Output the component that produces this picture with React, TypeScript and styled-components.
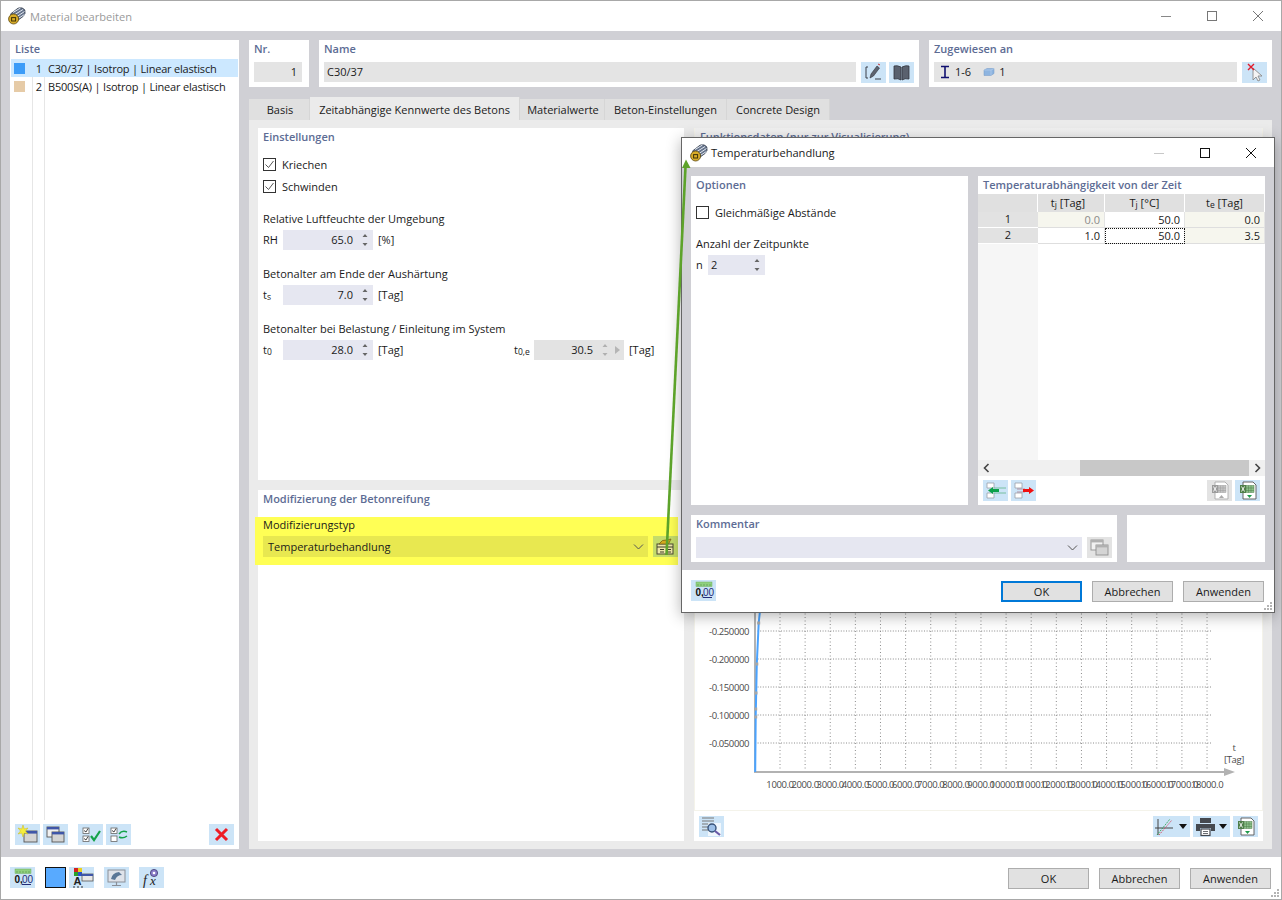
import React from "react";
import styled, { createGlobalStyle } from "styled-components";

const GlobalStyle = createGlobalStyle`
  html, body {
    margin: 0;
    padding: 0;
    background: #fff;
  }
  body {
    font-family: "Open Sans", "Noto Sans", sans-serif;
    font-size: 11px;
    color: #1a1a1a;
  }
  * {
    box-sizing: border-box;
  }
`;

const BLUE = "#cce4f7";

/* ---------- icons ---------- */

const Svg = styled.svg`
  display: block;
  flex-shrink: 0;
`;

function AppLogo() {
  return (
    <Svg width="18" height="18" viewBox="0 0 18 18">
      <path d="M2.5 7 L10 1.2 Q14.5 -0.2 16.8 3 Q18 7 15 9.5 L7.5 15 Z" fill="#66748c" stroke="#333d4d" strokeWidth="0.8" />
      <path d="M5 5.5 L12.5 1 M7 7.5 L15 2.5 M9 9.5 L16.5 4.5 M11 11 L16.5 7.5" stroke="#e3e8f0" strokeWidth="1" />
      <circle cx="5.6" cy="12" r="5" fill="#d8ac28" stroke="#5c4810" strokeWidth="0.8" />
      <rect x="3.6" y="10.6" width="4" height="3.4" fill="none" stroke="#3f3206" strokeWidth="1" />
    </Svg>
  );
}

function EditIcon() {
  return (
    <Svg width="25" height="21" viewBox="0 0 25 21">
      <path d="M7 5 H5 V16 H7 M14 17 H20" fill="none" stroke="#3a3f49" strokeWidth="1" />
      <path d="M9 16 L10 12 L16 4 L18.5 6 L12.5 14 Z" fill="#5d6370" stroke="#2f333b" strokeWidth="0.6" />
      <path d="M17 2 L19 3" stroke="#c33" strokeWidth="1" />
    </Svg>
  );
}

function BookIcon() {
  return (
    <Svg width="25" height="21" viewBox="0 0 25 21">
      <path d="M12 5 Q8 3 5 4 V17 Q9 16 12 18 Z" fill="#5a616e" stroke="#30343c" strokeWidth="0.8" />
      <path d="M13 5 Q17 3 20 4 V17 Q16 16 13 18 Z" fill="#5a616e" stroke="#30343c" strokeWidth="0.8" />
    </Svg>
  );
}

function CursorXIcon() {
  return (
    <Svg width="25" height="21" viewBox="0 0 25 21">
      <path d="M11 6 L11 18 L14 15 L16 19 L18 18 L16 14 L20 14 Z" fill="#f4f4f4" stroke="#8a8a8a" strokeWidth="0.9" />
      <path d="M6 2 L12 8 M12 2 L6 8" stroke="#e11a2b" strokeWidth="1.4" />
    </Svg>
  );
}

function MemberIcon() {
  return (
    <Svg width="12" height="14" viewBox="0 0 12 14">
      <path d="M2 1.5 H10 M6 1.5 V12.5 M2 12.5 H10" stroke="#101070" strokeWidth="1.6" fill="none" />
    </Svg>
  );
}

function SolidIcon() {
  return (
    <Svg width="12" height="10" viewBox="0 0 12 10">
      <path d="M1 3 L4 1.5 H11 V6.5 L8 8.5 H1 Z" fill="#8db4e0" stroke="#7399c7" strokeWidth="0.5" />
      <path d="M1 3 H8 V8.5 M8 3 L11 1.5" stroke="#bcd4ef" strokeWidth="0.6" fill="none" />
    </Svg>
  );
}

function ClapIcon() {
  return (
    <Svg width="25" height="21" viewBox="0 0 25 21">
      <rect x="4" y="8" width="16" height="10" fill="#eee6a8" stroke="#4a4a33" strokeWidth="1" />
      <path d="M4 11 H20 M7 13.5 H11 M14 13.5 H18 M7 16 H11 M14 16 H18" stroke="#3f3f2a" strokeWidth="1" />
      <path d="M6 8 Q9 3 14 4 L18 3 L16 7 L15 8 Z" fill="#d3a91e" stroke="#6e5a14" strokeWidth="0.7" />
    </Svg>
  );
}

function RowInIcon() {
  return (
    <Svg width="25" height="21" viewBox="0 0 25 21">
      <path d="M4 3 H11 V8 H4 Z M4 13 H11 V18 H4 Z" fill="#fff" stroke="#9aa0a8" strokeWidth="0.8" />
      <path d="M11 8 H23 M11 13 H23" stroke="#62b58a" strokeWidth="0.8" />
      <path d="M5 10.5 L10 7 V9 H16 V12 H10 V14 Z" fill="#0ba14a" />
    </Svg>
  );
}

function RowOutIcon() {
  return (
    <Svg width="25" height="21" viewBox="0 0 25 21">
      <path d="M4 3 H11 V8 H4 Z M4 13 H11 V18 H4 Z" fill="#fff" stroke="#9aa0a8" strokeWidth="0.8" />
      <path d="M6 9 H14 M6 12 H14" stroke="#b08a9a" strokeWidth="0.9" />
      <path d="M23 10.5 L18 7 V9 H12 V12 H18 V14 Z" fill="#f01010" />
    </Svg>
  );
}

function SheetIcon({ $active, $import }: { $active?: boolean; $import?: boolean }) {
  const main = $active ? "#4f7f4a" : "#9c9c9c";
  const fill = $active ? "#8cc08a" : "#c4c4c4";
  return (
    <Svg width="25" height="21" viewBox="0 0 25 21">
      <path d="M8 2 H18 L21 5 V19 H8 Z" fill="#fff" stroke={$active ? "#555" : "#aaa"} strokeWidth="0.9" />
      <rect x="5" y="5" width="6" height="8" fill={main} />
      <path d="M6.5 6.5 L9.5 11.5 M9.5 6.5 L6.5 11.5" stroke="#fff" strokeWidth="0.9" />
      <rect x="11" y="5.5" width="8" height="7" fill={fill} stroke={main} strokeWidth="0.5" />
      <path d="M13.5 5.5 V12.5 M16 5.5 V12.5 M11 8 H19 M11 10.5 H19" stroke={main} strokeWidth="0.5" />
      <path d={$import ? "M12 15 H17 L14.5 18 Z" : "M12 18 H17 L14.5 15 Z"} fill={$active ? "#1e9a4a" : "#aaa"} />
    </Svg>
  );
}

function WindowsIcon({ $muted }: { $muted?: boolean }) {
  const stroke = $muted ? "#909090" : "#555";
  const head = $muted ? "#b0b0b0" : "#3f56a8";
  return (
    <Svg width="25" height="21" viewBox="0 0 25 21">
      <rect x="4" y="3" width="12" height="10" fill="#f1f1f1" stroke={stroke} strokeWidth="0.9" />
      <rect x="4" y="3" width="12" height="2.4" fill={head} />
      <rect x="9" y="8" width="12" height="10" fill="#d4d4d4" stroke={stroke} strokeWidth="0.9" />
      <rect x="9" y="8" width="12" height="2.4" fill={head} />
    </Svg>
  );
}

function NewWindowIcon() {
  return (
    <Svg width="25" height="21" viewBox="0 0 25 21">
      <rect x="9" y="7" width="13" height="11" fill="#d4d4d4" stroke="#555" strokeWidth="0.9" />
      <rect x="9" y="7" width="13" height="2.6" fill="#3f56a8" />
      <path d="M8 1 L9.3 5 L13 4 L10.5 7 L13 10 L9.3 9 L8 13 L6.7 9 L3 10 L5.5 7 L3 4 L6.7 5 Z" fill="#f5ee3c" stroke="#c8b820" strokeWidth="0.5" />
    </Svg>
  );
}

function CheckListIcon({ $swap }: { $swap?: boolean }) {
  return (
    <Svg width="25" height="21" viewBox="0 0 25 21">
      <rect x="5" y="4" width="6" height="5.5" fill="#fff" stroke="#666" strokeWidth="0.8" />
      <rect x="5" y="12" width="6" height="5.5" fill="#fff" stroke="#666" strokeWidth="0.8" />
      <path d="M6 6.5 L8 8 L10 4.5" stroke="#333" fill="none" strokeWidth="0.9" />
      {$swap ? (
        <path d="M13 10 Q16 6 21 8 M21 12 Q17 15 13 13" stroke="#15a34a" strokeWidth="1.5" fill="none" />
      ) : (
        <>
          <path d="M6 14.5 L8 16 L10 12.5" stroke="#333" fill="none" strokeWidth="0.9" />
          <path d="M13 12 L16 16 L22 7" stroke="#16a34a" strokeWidth="2.2" fill="none" />
        </>
      )}
    </Svg>
  );
}

function RedCrossIcon() {
  return (
    <Svg width="25" height="21" viewBox="0 0 25 21">
      <path d="M7 5 L18 16 M18 5 L7 16" stroke="#ee1c25" strokeWidth="3" />
    </Svg>
  );
}

function UnitsIcon() {
  return (
    <Svg width="25" height="21" viewBox="0 0 25 21">
      <rect x="5" y="2" width="16" height="4.5" fill="#8fd07f" stroke="#6fae62" strokeWidth="0.5" />
      <path d="M7 4 V6 M10 4 V6 M13 4 V6 M16 4 V6 M19 4 V6" stroke="#5b9a50" strokeWidth="0.7" />
      <UnitsText x="4.5" y="15.5" fontSize="10" fill="#111">0,</UnitsText>
      <UnitsDigits x="12" y="15.5" fontSize="10" fill="#232c78">00</UnitsDigits>
      <path d="M12 17.5 H21" stroke="#232c78" strokeWidth="1" />
    </Svg>
  );
}

const UnitsText = styled.text`
  font-family: "Liberation Sans", sans-serif;
  font-weight: 700;
`;

const UnitsDigits = styled.text`
  font-family: "Liberation Sans", sans-serif;
`;

function ColorTextIcon() {
  return (
    <Svg width="25" height="21" viewBox="0 0 25 21">
      <rect x="5" y="1" width="4" height="4" fill="#d42020" />
      <rect x="9" y="1" width="4" height="4" fill="#e8d020" />
      <rect x="5" y="5" width="4" height="4" fill="#2aa02a" />
      <rect x="9" y="5" width="4" height="4" fill="#2a50c8" />
      <rect x="13" y="7" width="11" height="7" fill="#e8e8e8" stroke="#555" strokeWidth="0.8" />
      <rect x="13" y="7" width="11" height="2" fill="#3f56a8" />
      <UnitsText x="4.5" y="18" fontSize="11" fill="#222">A</UnitsText>
      <path d="M4 20 H6 M8 20 H10 M12 20 H14" stroke="#333" strokeWidth="1" />
    </Svg>
  );
}

function MonitorIcon() {
  return (
    <Svg width="25" height="21" viewBox="0 0 25 21">
      <rect x="4" y="3" width="17" height="12" fill="#dfe3ea" stroke="#8a8f98" strokeWidth="1" />
      <path d="M7 12 Q8 6 15 5 L18 8 Q13 8 11 13 Z" fill="#5a7797" />
      <path d="M12.5 15 V18 M8 18.5 H17" stroke="#8a8f98" strokeWidth="1.2" />
    </Svg>
  );
}

function FormulaIcon() {
  return (
    <Svg width="25" height="21" viewBox="0 0 25 21">
      <circle cx="15" cy="6" r="3.6" fill="#8a7cc8" stroke="#3d3a6e" strokeWidth="0.8" />
      <circle cx="15" cy="6" r="1.3" fill="#fff" />
      <FormulaText x="4" y="18" fontSize="14" fill="#222">f</FormulaText>
      <FormulaText x="11" y="18" fontSize="13" fill="#222">x</FormulaText>
    </Svg>
  );
}

const FormulaText = styled.text`
  font-family: "Liberation Serif", serif;
  font-style: italic;
`;

function GraphIcon() {
  return (
    <Svg width="25" height="21" viewBox="0 0 25 21">
      <path d="M5 3 V19 M2 12 H20" stroke="#444" strokeWidth="1" fill="none" />
      <path d="M4 19 L17 3" stroke="#2a9d4a" strokeWidth="0.9" strokeDasharray="1.5 1" />
      <path d="M6 19 L19 4" stroke="#d0485c" strokeWidth="0.9" strokeDasharray="1.5 1" />
    </Svg>
  );
}

function PrintIcon() {
  return (
    <Svg width="25" height="21" viewBox="0 0 25 21">
      <rect x="7" y="2" width="11" height="5" fill="#45494f" />
      <path d="M3 8 H22 V15 H18 V12 H7 V15 H3 Z" fill="#45494f" />
      <rect x="8" y="13" width="9" height="6.5" fill="#fff" stroke="#45494f" strokeWidth="1.2" />
      <path d="M10 15.5 H15 M10 17.5 H15" stroke="#45494f" strokeWidth="0.8" />
    </Svg>
  );
}

function ZoomListIcon() {
  return (
    <Svg width="25" height="21" viewBox="0 0 25 21">
      <path d="M3 2 H15 M3 5 H15 M3 8 H13 M3 11 H10 M3 14 H10" stroke="#777" strokeWidth="1.2" />
      <rect x="9" y="7" width="13" height="13" fill="#fff" opacity="0.7" />
      <circle cx="13" cy="12" r="4" fill="#9dc0e8" stroke="#36527a" strokeWidth="1.4" />
      <path d="M16 15 L21 19" stroke="#6a5aa8" strokeWidth="2.2" />
    </Svg>
  );
}

function SpinArrows({ $muted }: { $muted?: boolean }) {
  const c = $muted ? "#b0b0b0" : "#666";
  return (
    <Svg width="8" height="14" viewBox="0 0 8 14">
      <path d="M4 1 L6.5 4 H1.5 Z M4 13 L1.5 10 H6.5 Z" fill={c} />
    </Svg>
  );
}

function Chevron() {
  return (
    <Svg width="11" height="6" viewBox="0 0 11 6">
      <path d="M1 0.5 L5.5 5 L10 0.5" fill="none" stroke="#555" strokeWidth="1" />
    </Svg>
  );
}

function ResizeGrip() {
  return (
    <GripBox width="10" height="10" viewBox="0 0 10 10">
      <path d="M7 1 h2 v2 h-2 Z M4 4 h2 v2 h-2 Z M7 4 h2 v2 h-2 Z M1 7 h2 v2 h-2 Z M4 7 h2 v2 h-2 Z M7 7 h2 v2 h-2 Z" fill="#b4b4b4" />
    </GripBox>
  );
}

const GripBox = styled.svg`
  position: absolute;
  right: 1px;
  bottom: 1px;
`;

function WindowControls({ $minMuted }: { $minMuted?: boolean }) {
  return (
    <Controls>
      <Svg width="12" height="12" viewBox="0 0 12 12">
        <path d="M1 6.5 H11" stroke={$minMuted ? "#c8c8c8" : "#888"} />
      </Svg>
      <Svg width="12" height="12" viewBox="0 0 12 12">
        <rect x="1.5" y="1.5" width="9" height="9" fill="none" stroke={$minMuted ? "#111" : "#777"} />
      </Svg>
      <Svg width="12" height="12" viewBox="0 0 12 12">
        <path d="M1 1 L11 11 M11 1 L1 11" stroke={$minMuted ? "#111" : "#777"} strokeWidth="1" />
      </Svg>
    </Controls>
  );
}

/* ---------- main window ---------- */

const Window = styled.div`
  position: relative;
  width: 1282px;
  height: 900px;
  overflow: hidden;
  display: flex;
  flex-direction: column;
  background: #fff;
  border: 1px solid #a8a8a8;
`;

const TitleBar = styled.div`
  height: 30px;
  flex-shrink: 0;
  display: flex;
  align-items: center;
  padding-left: 7px;
  gap: 4px;
`;

const TitleText = styled.span<{ $muted?: boolean }>`
  font-size: 11.1px;
  color: ${(p) => (p.$muted ? "#9a9a9a" : "#1a1a1a")};
`;

const Controls = styled.div`
  margin-left: auto;
  display: flex;
  gap: 34px;
  padding-right: 17px;
`;

const Body = styled.div`
  flex: 1;
  display: flex;
  gap: 10px;
  padding: 9px 9px 8px;
  background: #d0d0d5;
  min-height: 0;
`;

const Panel = styled.section`
  background: #fff;
  display: flex;
  flex-direction: column;
`;

const Heading = styled.h3`
  margin: 0;
  height: 18px;
  line-height: 18px;
  font-size: 11px;
  font-weight: 600;
  color: #5d6c94;
  padding-left: 5px;
  flex-shrink: 0;
`;

const ListPanel = styled(Panel)`
  width: 229px;
`;

const ListBody = styled.div`
  flex: 1;
  margin: 1px 1px 0;
  background-image: linear-gradient(#e6e6e6, #e6e6e6), linear-gradient(#e6e6e6, #e6e6e6);
  background-size: 1px 100%, 1px 100%;
  background-position: 21px 0, 33px 0;
  background-repeat: no-repeat;
`;

const ListRow = styled.div<{ $selected?: boolean }>`
  height: 18px;
  display: flex;
  align-items: center;
  background: ${(p) => (p.$selected ? "#cce8ff" : "transparent")};
`;

const Swatch = styled.span<{ $color: string }>`
  width: 11px;
  height: 11px;
  margin-left: 3px;
  background: ${(p) => p.$color};
`;

const ListNumber = styled.span`
  width: 17px;
  text-align: right;
`;

const ListText = styled.span`
  margin-left: 6px;
  white-space: nowrap;
  letter-spacing: -0.2px;
`;

const ListToolbar = styled.div`
  height: 29px;
  padding: 4px 5px 4px;
  display: flex;
  flex-shrink: 0;
`;

const IconButton = styled.div<{ $off?: boolean; $wide?: boolean; $gap?: number }>`
  width: ${(p) => (p.$wide ? 37 : 25)}px;
  height: 21px;
  flex-shrink: 0;
  display: flex;
  align-items: center;
  justify-content: flex-start;
  background: ${(p) => (p.$off ? "#e3e3e3" : BLUE)};
  margin-left: ${(p) => p.$gap ?? 0}px;
`;

const Spacer = styled.div`
  flex: 1;
`;

const Main = styled.div`
  flex: 1;
  display: flex;
  flex-direction: column;
  min-width: 0;
`;

const TopRow = styled.div`
  height: 47px;
  display: flex;
  gap: 10px;
  flex-shrink: 0;
`;

const TopPanel = styled(Panel)<{ $width: number }>`
  width: ${(p) => p.$width}px;
`;

const TopFieldRow = styled.div`
  display: flex;
  gap: 3px;
  padding: 4px 5px 0;
`;

const ReadField = styled.div<{ $right?: boolean }>`
  flex: 1;
  height: 20px;
  line-height: 20px;
  background: #e4e4e4;
  padding: 0 5px 0 3px;
  display: flex;
  align-items: center;
  justify-content: ${(p) => (p.$right ? "flex-end" : "flex-start")};
  min-width: 0;
  margin-right: 2px;
`;

const AssignedItem = styled.span<{ $first?: boolean }>`
  display: flex;
  align-items: center;
  gap: 4px;
  margin-left: ${(p) => (p.$first ? 2 : 12)}px;
`;

const Tabs = styled.div`
  display: flex;
  height: 23px;
  margin-top: 10px;
  align-items: flex-end;
  flex-shrink: 0;
`;

const Tab = styled.div<{ $active?: boolean; $width: number; $shift?: number }>`
  width: ${(p) => p.$width}px;
  height: ${(p) => (p.$active ? 23 : 21)}px;
  line-height: ${(p) => (p.$active ? 25 : 22)}px;
  text-align: center;
  white-space: nowrap;
  padding-left: ${(p) => p.$shift ?? 0}px;
  background: ${(p) => (p.$active ? "#ebebeb" : "#e0e0e0")};
  border-right: 1px solid #d6d6d6;
`;

const TabContent = styled.div`
  flex: 1;
  display: flex;
  gap: 10px;
  padding: 8px 9px;
  background: #ebebeb;
  min-height: 0;
`;

const LeftColumn = styled.div`
  width: 426px;
  display: flex;
  flex-direction: column;
  gap: 10px;
`;

const SettingsPanel = styled(Panel)`
  height: 352px;
`;

const ModifyPanel = styled(Panel)`
  flex: 1;
`;

const PanelContent = styled.div`
  padding: 0 5px;
`;

const CheckRow = styled.label<{ $first?: boolean }>`
  height: 20px;
  display: flex;
  align-items: center;
  gap: 6px;
  margin-top: ${(p) => (p.$first ? 8 : 2)}px;
`;

const CheckBox = styled.span`
  width: 13px;
  height: 13px;
  border: 1px solid #333;
  background: #fff;
  display: flex;
  align-items: center;
  justify-content: center;
`;

function Tick() {
  return (
    <Svg width="11" height="11" viewBox="0 0 11 11">
      <path d="M1.5 5.5 L4.5 8.5 L9.5 2" fill="none" stroke="#555" strokeWidth="1" />
    </Svg>
  );
}

const FieldGroup = styled.div<{ $first?: boolean }>`
  margin-top: ${(p) => (p.$first ? 14 : 15)}px;
`;

const FieldLabel = styled.div`
  height: 18px;
  line-height: 18px;
  margin-bottom: 2px;
`;

const FieldRow = styled.div`
  display: flex;
  align-items: center;
  height: 20px;
`;

const FieldPair = styled.div`
  display: flex;
  align-items: center;
  width: 251px;
`;

const Symbol = styled.span<{ $width?: number }>`
  width: ${(p) => p.$width ?? 20}px;
  flex-shrink: 0;
  padding-bottom: 2px;
`;

const Sub = styled.span`
  font-size: 8.5px;
  vertical-align: -1px;
`;

const Spin = styled.div<{ $off?: boolean; $width?: number }>`
  width: ${(p) => p.$width ?? 90}px;
  height: 20px;
  display: flex;
  align-items: center;
  flex-shrink: 0;
  background: ${(p) => (p.$off ? "#e3e3e3" : "#e6e7f1")};
`;

const SpinValue = styled.span<{ $left?: boolean }>`
  flex: 1;
  text-align: ${(p) => (p.$left ? "left" : "right")};
  padding-left: ${(p) => (p.$left ? 3 : 0)}px;
  padding-bottom: 2px;
`;

const SpinSide = styled.span<{ $extra?: boolean }>`
  width: ${(p) => (p.$extra ? 31 : 20)}px;
  display: flex;
  justify-content: flex-start;
  align-items: center;
  padding-left: 8px;
  gap: 6px;
`;

const TinyRight = styled.span`
  width: 0;
  height: 0;
  border-left: 5px solid #b5b5b5;
  border-top: 4px solid transparent;
  border-bottom: 4px solid transparent;
`;

const Unit = styled.span`
  margin-left: 5px;
  padding-bottom: 2px;
`;

const Highlight = styled.div`
  margin: 9px 1px 0 -8px;
  height: 48px;
  background: #ffff55;
  padding: 0 0 0 8px;
`;

const HighlightLabel = styled.div`
  height: 19px;
  line-height: 16px;
`;

const ComboRow = styled.div`
  display: flex;
  gap: 5px;
`;

const Combo = styled.div<{ $tone?: string; $width: number }>`
  width: ${(p) => p.$width}px;
  height: 21px;
  display: flex;
  align-items: center;
  justify-content: space-between;
  padding: 0 4px 0 5px;
  background: ${(p) => p.$tone ?? "#e6e7f1"};
`;

const HighlightButton = styled.div`
  width: 25px;
  height: 21px;
  background: #c5dc6a;
  flex-shrink: 0;
`;

const ChartColumn = styled.div`
  flex: 1;
  display: flex;
  flex-direction: column;
  min-width: 0;
`;

const ChartPanel = styled.div`
  height: 683px;
  background: linear-gradient(#f0f0f0, #ffffff 30px);
  border: 1px solid #f4f3ea;
  border-top: 0;
`;

const ChartHeading = styled(Heading)`
  height: 17px;
  line-height: 17px;
`;

const ChartCanvas = styled.svg`
  display: block;
  text {
    font-family: "Open Sans", "Noto Sans", sans-serif;
    font-size: 9.5px;
    letter-spacing: -0.4px;
    fill: #4a4a4a;
  }
`;

const ChartToolbar = styled.div`
  flex: 1;
  background: #fff;
  display: flex;
  align-items: center;
  padding: 0 5px;
  gap: 3px;
`;

const Arrowhead = styled.span`
  width: 0;
  height: 0;
  margin-left: 1px;
  border-top: 5px solid #111;
  border-left: 4px solid transparent;
  border-right: 4px solid transparent;
`;

const Footer = styled.div`
  height: 42px;
  flex-shrink: 0;
  display: flex;
  align-items: center;
  padding: 0 10px 0 9px;
  position: relative;
`;

const FooterIcons = styled.div`
  display: flex;
  margin-top: -2px;
`;

const ColorBlock = styled.div`
  width: 21px;
  height: 21px;
  background: #58aaff;
  border: 1px solid #111;
  margin-left: 10px;
  margin-right: 3px;
`;

const FooterButtons = styled.div`
  margin-left: auto;
  display: flex;
  gap: 10px;
`;

const PushButton = styled.div<{ $primary?: boolean }>`
  width: 81px;
  height: 21px;
  line-height: 19px;
  text-align: center;
  background: #e1e1e1;
  border: 1px solid #adadad;
  ${(p) => (p.$primary ? "border: 2px solid #0078d7; line-height: 17px;" : "")}
`;

/* ---------- dialog ---------- */

const Dialog = styled.div`
  position: absolute;
  left: 680px;
  top: 136px;
  width: 594px;
  height: 476px;
  display: flex;
  flex-direction: column;
  background: #fff;
  border: 1px solid #666;
  box-shadow: 0 3px 14px rgba(0, 0, 0, 0.3);
`;

const DialogTitle = styled(TitleBar)`
  height: 29px;
  padding-left: 8px;
  gap: 3px;
`;

const DialogBody = styled.div`
  flex: 1;
  background: #d0d0d5;
  padding: 9px 9px 8px;
  display: flex;
  flex-direction: column;
  gap: 10px;
`;

const DialogRow = styled.div<{ $height: number }>`
  height: ${(p) => p.$height}px;
  display: flex;
  gap: 10px;
`;

const DialogPanel = styled(Panel)<{ $width: number }>`
  width: ${(p) => p.$width}px;
`;

const NarrowSymbol = styled.span`
  width: 12px;
  padding-bottom: 2px;
`;

const OptionSpin = styled(FieldGroup)`
  margin-top: 13px;
`;

const TempGrid = styled.div`
  display: grid;
  grid-template-columns: 60px 67px 80px 80px;
  grid-auto-rows: 16px;
`;

const HeadCell = styled.div<{ $pad?: number }>`
  height: 18px;
  line-height: 18px;
  text-align: center;
  background: #e0e0e0;
  border-right: 1px solid #fff;
  padding-right: ${(p) => p.$pad ?? 0}px;
`;

const RowHead = styled.div`
  background: #e2e2e2;
  text-align: center;
  line-height: 14px;
  border-bottom: 1px solid #fff;
`;

const Cell = styled.div<{ $readonly?: boolean; $muted?: boolean; $focus?: boolean }>`
  text-align: right;
  line-height: 16px;
  padding-right: 4px;
  background: ${(p) => (p.$readonly ? "#f6f6ee" : "#fff")};
  color: ${(p) => (p.$muted ? "#8a8a8a" : "#1a1a1a")};
  border-bottom: 1px solid #dedede;
  border-right: 1px solid #e4e4e4;
  ${(p) => (p.$focus ? "outline: 1px dotted #111; outline-offset: -1px;" : "")}
`;

const GridRow = styled.div`
  display: contents;
`;

const GridFill = styled.div`
  flex: 1;
  width: 60px;
  background: #f6f6f6;
`;

const GridWrap = styled.div`
  height: 266px;
  display: flex;
  flex-direction: column;
`;

const GridHeader = styled.div`
  height: 18px;
  display: grid;
  grid-template-columns: 60px 67px 80px 80px;
`;

const ScrollBar = styled.div`
  height: 16px;
  background: #f0f0f0;
  display: flex;
  align-items: center;
  justify-content: space-between;
`;

const ScrollArrow = styled.span`
  width: 16px;
  display: flex;
  justify-content: center;
`;

const ScrollTrack = styled.div`
  flex: 1;
  height: 16px;
  padding-left: 86px;
`;

const ScrollThumb = styled.div`
  height: 100%;
  background: #c8c8c8;
`;

const GridToolbar = styled.div`
  display: flex;
  gap: 3px;
  padding: 4px 5px 0;
`;

const CommentRow = styled.div`
  display: flex;
  gap: 5px;
  padding: 4px 5px 0;
`;

const DialogFooter = styled(Footer)`
  flex: 1;
`;

const Connector = styled.svg`
  position: absolute;
  left: 0;
  top: 0;
  pointer-events: none;
`;

const yLabels = ["-0.250000", "-0.200000", "-0.150000", "-0.100000", "-0.050000"];
const yTicks = [631, 659, 687, 715, 743];
const xTicks = Array.from({ length: 18 }, (_, i) => 780 + i * 25.12);
const markers = [
  [755.7, 717],
  [755.7, 709],
  [756, 693],
  [756.8, 664],
  [758.7, 623],
];

function Chart() {
  return (
    <ChartCanvas width="567" height="666" viewBox="695 145 567 666">
      {yTicks.map((y) => (
        <line key={y} x1="755" x2="1212" y1={y} y2={y} stroke="#8c8c8c" strokeDasharray="1 1.6" />
      ))}
      {xTicks.map((x) => (
        <line key={x} x1={x} x2={x} y1="610" y2="772" stroke="#8c8c8c" strokeDasharray="1 2.5" />
      ))}
      <path d="M755 610 V772 H1228" stroke="#b2b2b2" strokeWidth="2" fill="none" />
      <path d="M1235 772 L1224 768 V776 Z" fill="#b2b2b2" />
      <path d="M755.2 772 L755.7 717 L756.8 664 L758.7 623 L760.5 606" stroke="#4aa3ff" strokeWidth="2" fill="none" />
      {markers.map(([x, y]) => (
        <rect key={y} x={x - 1.5} y={y - 1.5} width="3" height="3" fill="#a8a8a8" />
      ))}
      {yLabels.map((l, i) => (
        <text key={l} x="749" y={yTicks[i] + 4} textAnchor="end">
          {l}
        </text>
      ))}
      {xTicks.map((x, i) => (
        <text key={x} x={x} y="788" textAnchor="middle">
          {`${(i + 1) * 1000}.0`}
        </text>
      ))}
      <text x="1234" y="751" textAnchor="middle">t</text>
      <text x="1234" y="763" textAnchor="middle">[Tag]</text>
    </ChartCanvas>
  );
}

function TemperatureDialog() {
  return (
    <Dialog>
      <DialogTitle>
        <AppLogo />
        <TitleText>Temperaturbehandlung</TitleText>
        <WindowControls $minMuted />
      </DialogTitle>
      <DialogBody>
        <DialogRow $height={329}>
          <DialogPanel $width={277}>
            <Heading>Optionen</Heading>
            <PanelContent>
              <CheckRow $first>
                <CheckBox />
                Gleichmäßige Abstände
              </CheckRow>
              <OptionSpin>
                <FieldLabel>Anzahl der Zeitpunkte</FieldLabel>
                <FieldRow>
                  <NarrowSymbol>n</NarrowSymbol>
                  <Spin $width={57}>
                    <SpinValue $left>2</SpinValue>
                    <SpinSide>
                      <SpinArrows />
                    </SpinSide>
                  </Spin>
                </FieldRow>
              </OptionSpin>
            </PanelContent>
          </DialogPanel>
          <DialogPanel $width={287}>
            <Heading>Temperaturabhängigkeit von der Zeit</Heading>
            <GridWrap>
              <GridHeader>
                <HeadCell />
                <HeadCell $pad={6}>
                  t<Sub>j</Sub> [Tag]
                </HeadCell>
                <HeadCell>
                  T<Sub>j</Sub> [°C]
                </HeadCell>
                <HeadCell>
                  t<Sub>e</Sub> [Tag]
                </HeadCell>
              </GridHeader>
              <TempGrid>
                <GridRow>
                  <RowHead>1</RowHead>
                  <Cell $readonly $muted>0.0</Cell>
                  <Cell>50.0</Cell>
                  <Cell $readonly>0.0</Cell>
                </GridRow>
                <GridRow>
                  <RowHead>2</RowHead>
                  <Cell>1.0</Cell>
                  <Cell $focus>50.0</Cell>
                  <Cell $readonly>3.5</Cell>
                </GridRow>
              </TempGrid>
              <GridFill />
            </GridWrap>
            <ScrollBar>
              <ScrollArrow>
                <Svg width="7" height="10" viewBox="0 0 7 10">
                  <path d="M5.5 1 L1.5 5 L5.5 9" fill="none" stroke="#444" strokeWidth="1.6" />
                </Svg>
              </ScrollArrow>
              <ScrollTrack>
                <ScrollThumb />
              </ScrollTrack>
              <ScrollArrow>
                <Svg width="7" height="10" viewBox="0 0 7 10">
                  <path d="M1.5 1 L5.5 5 L1.5 9" fill="none" stroke="#444" strokeWidth="1.6" />
                </Svg>
              </ScrollArrow>
            </ScrollBar>
            <GridToolbar>
              <IconButton>
                <RowInIcon />
              </IconButton>
              <IconButton>
                <RowOutIcon />
              </IconButton>
              <Spacer />
              <IconButton $off>
                <SheetIcon />
              </IconButton>
              <IconButton>
                <SheetIcon $active $import />
              </IconButton>
            </GridToolbar>
          </DialogPanel>
        </DialogRow>
        <DialogRow $height={47}>
          <DialogPanel $width={426}>
            <Heading>Kommentar</Heading>
            <CommentRow>
              <Combo $width={386}>
                <span />
                <Chevron />
              </Combo>
              <IconButton $off>
                <WindowsIcon $muted />
              </IconButton>
            </CommentRow>
          </DialogPanel>
          <DialogPanel $width={138} />
        </DialogRow>
      </DialogBody>
      <DialogFooter>
        <FooterIcons>
          <IconButton>
            <UnitsIcon />
          </IconButton>
        </FooterIcons>
        <FooterButtons>
          <PushButton $primary>OK</PushButton>
          <PushButton>Abbrechen</PushButton>
          <PushButton>Anwenden</PushButton>
        </FooterButtons>
        <ResizeGrip />
      </DialogFooter>
    </Dialog>
  );
}

export default function App() {
  return (
    <>
      <GlobalStyle />
      <Window>
        <TitleBar>
          <AppLogo />
          <TitleText $muted>Material bearbeiten</TitleText>
          <WindowControls />
        </TitleBar>
        <Body>
          <ListPanel>
            <Heading>Liste</Heading>
            <ListBody>
              <ListRow $selected>
                <Swatch $color="#3c9cf8" />
                <ListNumber>1</ListNumber>
                <ListText>C30/37 | Isotrop | Linear elastisch</ListText>
              </ListRow>
              <ListRow>
                <Swatch $color="#e6cba7" />
                <ListNumber>2</ListNumber>
                <ListText>B500S(A) | Isotrop | Linear elastisch</ListText>
              </ListRow>
            </ListBody>
            <ListToolbar>
              <IconButton>
                <NewWindowIcon />
              </IconButton>
              <IconButton $gap={3}>
                <WindowsIcon />
              </IconButton>
              <IconButton $gap={10}>
                <CheckListIcon />
              </IconButton>
              <IconButton $gap={3}>
                <CheckListIcon $swap />
              </IconButton>
              <Spacer />
              <IconButton>
                <RedCrossIcon />
              </IconButton>
            </ListToolbar>
          </ListPanel>
          <Main>
            <TopRow>
              <TopPanel $width={60}>
                <Heading>Nr.</Heading>
                <TopFieldRow>
                  <ReadField $right>1</ReadField>
                </TopFieldRow>
              </TopPanel>
              <TopPanel $width={600}>
                <Heading>Name</Heading>
                <TopFieldRow>
                  <ReadField>C30/37</ReadField>
                  <IconButton>
                    <EditIcon />
                  </IconButton>
                  <IconButton>
                    <BookIcon />
                  </IconButton>
                </TopFieldRow>
              </TopPanel>
              <TopPanel $width={343}>
                <Heading>Zugewiesen an</Heading>
                <TopFieldRow>
                  <ReadField>
                    <AssignedItem $first>
                      <MemberIcon />
                      1-6
                    </AssignedItem>
                    <AssignedItem>
                      <SolidIcon />
                      1
                    </AssignedItem>
                  </ReadField>
                  <IconButton>
                    <CursorXIcon />
                  </IconButton>
                </TopFieldRow>
              </TopPanel>
            </TopRow>
            <Tabs>
              <Tab $width={61} $shift={2}>Basis</Tab>
              <Tab $width={210} $active>Zeitabhängige Kennwerte des Betons</Tab>
              <Tab $width={85} $shift={2}>Materialwerte</Tab>
              <Tab $width={122}>Beton-Einstellungen</Tab>
              <Tab $width={103}>Concrete Design</Tab>
            </Tabs>
            <TabContent>
              <LeftColumn>
                <SettingsPanel>
                  <Heading>Einstellungen</Heading>
                  <PanelContent>
                    <CheckRow $first>
                      <CheckBox>
                        <Tick />
                      </CheckBox>
                      Kriechen
                    </CheckRow>
                    <CheckRow>
                      <CheckBox>
                        <Tick />
                      </CheckBox>
                      Schwinden
                    </CheckRow>
                    <FieldGroup $first>
                      <FieldLabel>Relative Luftfeuchte der Umgebung</FieldLabel>
                      <FieldRow>
                        <Symbol>RH</Symbol>
                        <Spin>
                          <SpinValue>65.0</SpinValue>
                          <SpinSide>
                            <SpinArrows />
                          </SpinSide>
                        </Spin>
                        <Unit>[%]</Unit>
                      </FieldRow>
                    </FieldGroup>
                    <FieldGroup>
                      <FieldLabel>Betonalter am Ende der Aushärtung</FieldLabel>
                      <FieldRow>
                        <Symbol>
                          t<Sub>s</Sub>
                        </Symbol>
                        <Spin>
                          <SpinValue>7.0</SpinValue>
                          <SpinSide>
                            <SpinArrows />
                          </SpinSide>
                        </Spin>
                        <Unit>[Tag]</Unit>
                      </FieldRow>
                    </FieldGroup>
                    <FieldGroup>
                      <FieldLabel>Betonalter bei Belastung / Einleitung im System</FieldLabel>
                      <FieldRow>
                        <FieldPair>
                          <Symbol>
                            t<Sub>0</Sub>
                          </Symbol>
                          <Spin>
                            <SpinValue>28.0</SpinValue>
                            <SpinSide>
                              <SpinArrows />
                            </SpinSide>
                          </Spin>
                          <Unit>[Tag]</Unit>
                        </FieldPair>
                        <Symbol>
                          t<Sub>0,e</Sub>
                        </Symbol>
                        <Spin $off>
                          <SpinValue>30.5</SpinValue>
                          <SpinSide $extra>
                            <SpinArrows $muted />
                            <TinyRight />
                          </SpinSide>
                        </Spin>
                        <Unit>[Tag]</Unit>
                      </FieldRow>
                    </FieldGroup>
                  </PanelContent>
                </SettingsPanel>
                <ModifyPanel>
                  <Heading>Modifizierung der Betonreifung</Heading>
                  <PanelContent>
                    <Highlight>
                      <HighlightLabel>Modifizierungstyp</HighlightLabel>
                      <ComboRow>
                        <Combo $width={386} $tone="#e8e850">
                          Temperaturbehandlung
                          <Chevron />
                        </Combo>
                        <HighlightButton>
                          <ClapIcon />
                        </HighlightButton>
                      </ComboRow>
                    </Highlight>
                  </PanelContent>
                </ModifyPanel>
              </LeftColumn>
              <ChartColumn>
                <ChartPanel>
                  <ChartHeading>Funktionsdaten (nur zur Visualisierung)</ChartHeading>
                  <Chart />
                </ChartPanel>
                <ChartToolbar>
                  <IconButton>
                    <ZoomListIcon />
                  </IconButton>
                  <Spacer />
                  <IconButton $wide>
                    <GraphIcon />
                    <Arrowhead />
                  </IconButton>
                  <IconButton $wide>
                    <PrintIcon />
                    <Arrowhead />
                  </IconButton>
                  <IconButton>
                    <SheetIcon $active $import />
                  </IconButton>
                </ChartToolbar>
              </ChartColumn>
            </TabContent>
          </Main>
        </Body>
        <Footer>
          <FooterIcons>
            <IconButton>
              <UnitsIcon />
            </IconButton>
            <ColorBlock />
            <IconButton>
              <ColorTextIcon />
            </IconButton>
            <IconButton $gap={10}>
              <MonitorIcon />
            </IconButton>
            <IconButton $gap={10}>
              <FormulaIcon />
            </IconButton>
          </FooterIcons>
          <FooterButtons>
            <PushButton>OK</PushButton>
            <PushButton>Abbrechen</PushButton>
            <PushButton>Anwenden</PushButton>
          </FooterButtons>
          <ResizeGrip />
        </Footer>
        <TemperatureDialog />
        <Connector width="1282" height="900" viewBox="0 0 1282 900">
          <path d="M665.5 554 L684.5 166" stroke="#5da32a" strokeWidth="2.6" fill="none" />
          <path d="M685 158.5 L681 167 H689.5 Z" fill="#5da32a" />
        </Connector>
      </Window>
    </>
  );
}
